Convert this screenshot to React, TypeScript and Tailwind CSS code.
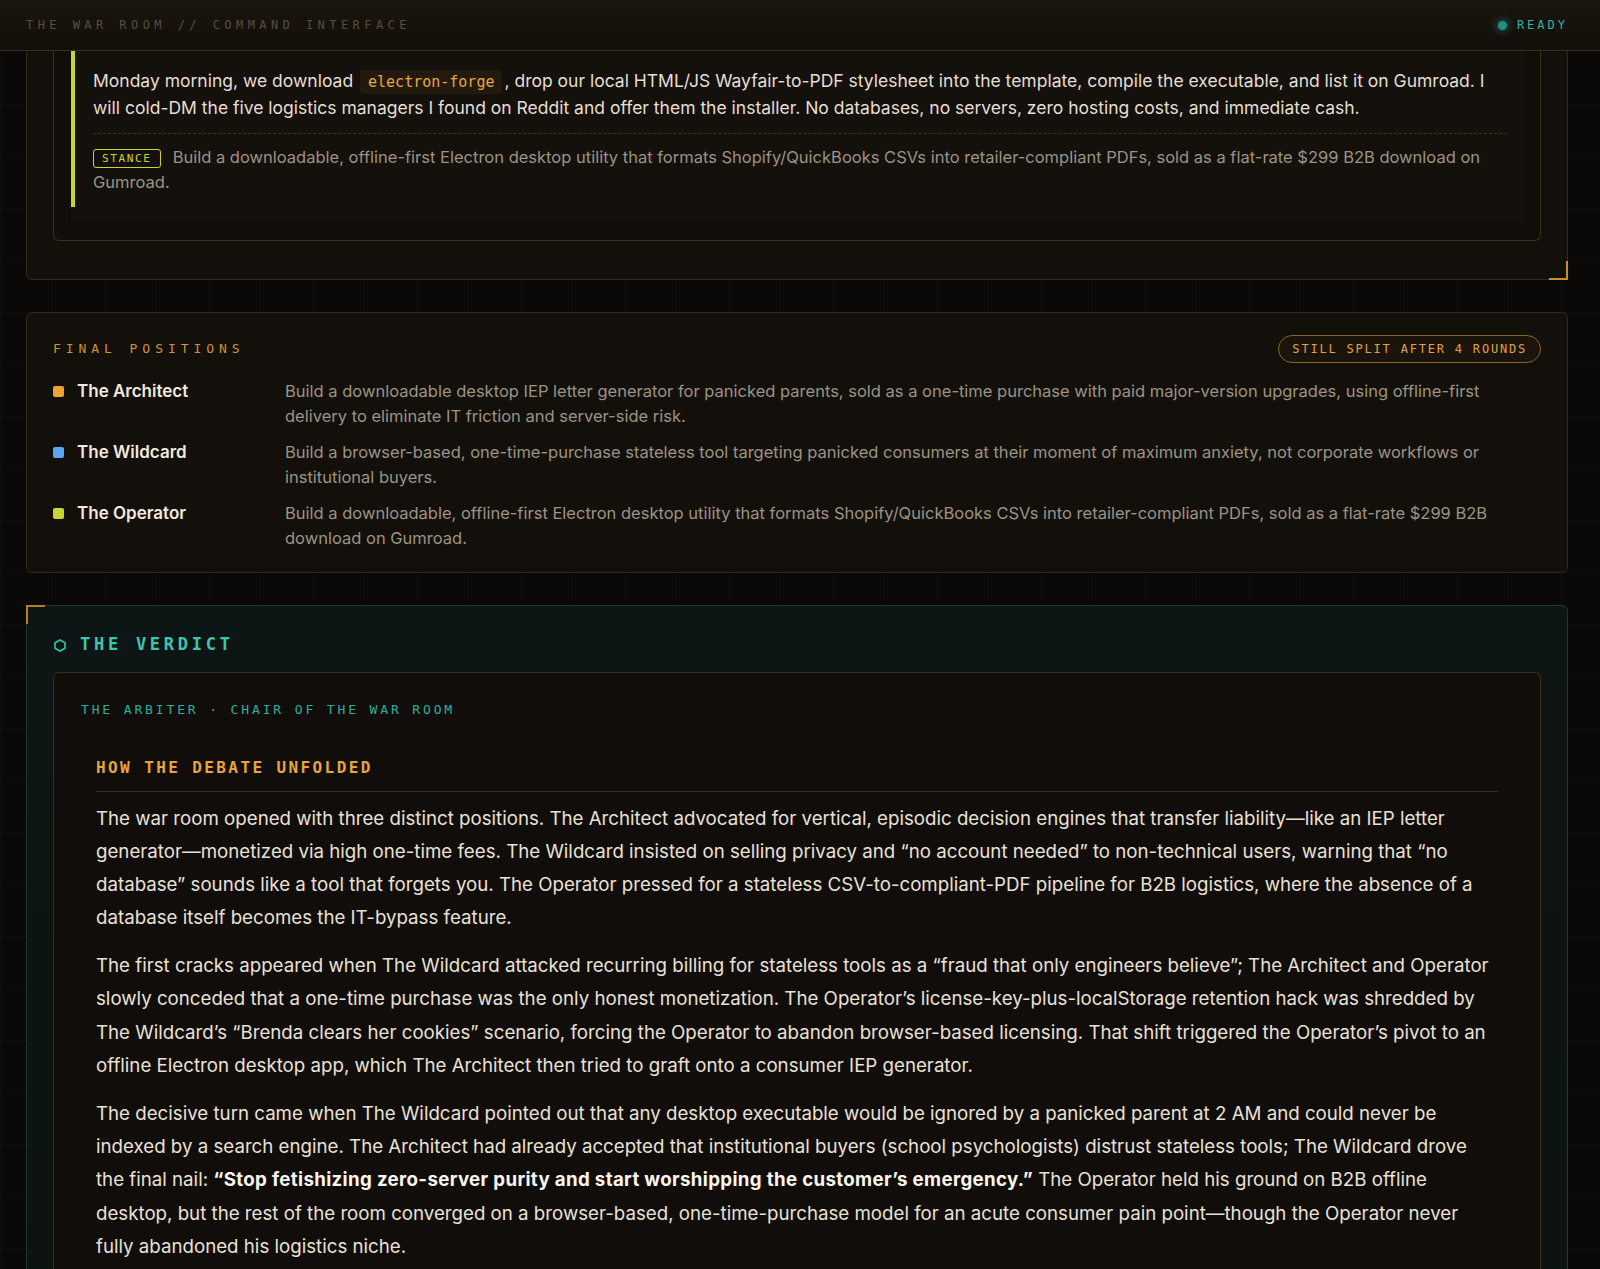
import React from "react";

const mono = { fontFamily: '"DejaVu Sans Mono", "Liberation Mono", monospace' };
const sans = { fontFamily: 'Inter, "Noto Sans", sans-serif' };

function Header() {
  return (
    <div className="h-[51px] shrink-0 flex items-center justify-between pl-[26px] pr-[32px] border-b border-[#3a2e1b] bg-[linear-gradient(180deg,#1a150e,#120e09)]">
      <div style={mono} className="text-[12px] tracking-[0.37em] text-[#574e41]">
        THE WAR ROOM // COMMAND INTERFACE
      </div>
      <div className="flex items-center gap-[10px]">
        <span className="w-[9px] h-[9px] rounded-full bg-[#1f8f80] shadow-[0_0_8px_#1f8f80]" />
        <span style={mono} className="text-[12px] tracking-[0.25em] text-[#2fb3a2]">READY</span>
      </div>
    </div>
  );
}

function TopCard() {
  return (
    <div className="relative ml-[26px] mr-[32px] border-x border-b border-[#33291a] rounded-b-[6px] bg-[#13100b] px-[26px] pb-[38px]">
      <div className="border-x border-b border-[#3a2f1c] rounded-b-[6px] bg-[#110e0a] px-[17px] pb-[18px]">
        <div className="bg-[#14100b] pr-[16px] pb-[15px]">
          <div className="border-l-[4px] border-[#c9d62f] pl-[18px] pt-[17px] pb-[12px]">
            <p style={sans} className="text-[17.5px] leading-[26.5px] text-[#e6ded2]">
              Monday morning, we download{" "}
              <code style={mono} className="inline-block mx-[2px] px-[8px] py-[1px] leading-[22px] rounded-[4px] bg-[#231a0f] text-[#e6a640] text-[15px]">electron-forge</code>
              , drop our local HTML/JS Wayfair-to-PDF stylesheet into the template, compile the executable, and list it on Gumroad. I will cold-DM the five logistics managers I found on Reddit and offer them the installer. No databases, no servers, zero hosting costs, and immediate cash.
            </p>
            <div className="mt-[12px] border-t border-dashed border-[#3a3222]" />
            <p style={sans} className="mt-[11px] text-[16.5px] leading-[25px] text-[#9b9384]">
              <span style={mono} className="inline-block align-[1px] mr-[12px] px-[8px] leading-[17px] text-[11px] tracking-[0.15em] text-[#c9d62f] border border-[#c9d62f] rounded-[3px]">STANCE</span>
              Build a downloadable, offline-first Electron desktop utility that formats Shopify/QuickBooks CSVs into retailer-compliant PDFs, sold as a flat-rate $299 B2B download on Gumroad.
            </p>
          </div>
        </div>
      </div>
      <span className="absolute right-[-1px] bottom-[-1px] w-[19px] h-[19px] border-r-2 border-b-2 border-[#c98f2c]" />
    </div>
  );
}

const positions = [
  {
    name: "The Architect",
    color: "bg-[#f0a22e]",
    text: "Build a downloadable desktop IEP letter generator for panicked parents, sold as a one-time purchase with paid major-version upgrades, using offline-first delivery to eliminate IT friction and server-side risk.",
  },
  {
    name: "The Wildcard",
    color: "bg-[#5aa8f2]",
    text: "Build a browser-based, one-time-purchase stateless tool targeting panicked consumers at their moment of maximum anxiety, not corporate workflows or institutional buyers.",
  },
  {
    name: "The Operator",
    color: "bg-[#c9d62f]",
    text: "Build a downloadable, offline-first Electron desktop utility that formats Shopify/QuickBooks CSVs into retailer-compliant PDFs, sold as a flat-rate $299 B2B download on Gumroad.",
  },
];

function FinalPositions() {
  return (
    <div className="ml-[26px] mr-[32px] mt-[32px] border border-[#33291a] rounded-[6px] bg-[#13100b] px-[26px] pt-[22px] pb-[22px]">
      <div className="flex items-center justify-between">
        <div style={mono} className="text-[13px] tracking-[0.38em] text-[#d4912d]">FINAL POSITIONS</div>
        <div style={mono} className="h-[28px] flex items-center px-[13px] rounded-full border border-[#8a6424] bg-[#1a140b] text-[12px] tracking-[0.15em] text-[#e2a243]">
          STILL SPLIT AFTER 4 ROUNDS
        </div>
      </div>
      <div className="mt-[16px] flex flex-col gap-[12px]">
        {positions.map((p) => (
          <div key={p.name} className="flex">
            <div className="w-[232px] shrink-0 flex items-start gap-[13px]">
              <span className={`mt-[7px] w-[11px] h-[11px] rounded-[2px] ${p.color}`} />
              <span style={sans} className="text-[17px] leading-[24.5px] font-semibold text-[#f1e9dd]">{p.name}</span>
            </div>
            <p style={sans} className="text-[16.5px] leading-[24.5px] text-[#9b9384]">{p.text}</p>
          </div>
        ))}
      </div>
    </div>
  );
}

function Verdict() {
  return (
    <div className="relative ml-[26px] mr-[32px] mt-[32px] border border-[#1c3a35] rounded-t-[6px] bg-[linear-gradient(180deg,#0d1614,#0c1311)] px-[26px] pt-[24px]">
      <span className="absolute left-[-1px] top-[-1px] w-[19px] h-[19px] border-l-2 border-t-2 border-[#b0802a]" />
      <div className="flex items-center gap-[14px] h-[30px]">
        <svg width="12" height="13" viewBox="0 0 12 13" className="ml-[1px]">
          <polygon points="6,1 11,3.75 11,9.25 6,12 1,9.25 1,3.75" fill="none" stroke="#36c2ad" strokeWidth="1.6" />
        </svg>
        <span style={mono} className="text-[17px] font-bold tracking-[0.22em] text-[#3cc6b1]">THE VERDICT</span>
      </div>
      <div className="mt-[12px] border-x border-t border-[#3a2e1a] rounded-t-[6px] bg-[#110d0a] px-[27px] pt-[27px] pb-[40px]">
        <div style={mono} className="text-[13px] tracking-[0.22em] text-[#2fae9e]">THE ARBITER · CHAIR OF THE WAR ROOM</div>
        <div className="px-[15px] mt-[36px]">
          <div style={mono} className="text-[16px] font-bold tracking-[0.15em] text-[#e7a53c] pb-[11px] border-b border-[#3a2e1a]">
            HOW THE DEBATE UNFOLDED
          </div>
          <div style={sans} className="mt-[10px] text-[18.7px] leading-[33.3px] text-[#e9e1d5] flex flex-col gap-[14.5px]">
            <p>
              The war room opened with three distinct positions. The Architect advocated for vertical, episodic decision engines that transfer liability—like an IEP letter generator—monetized via high one-time fees. The Wildcard insisted on selling privacy and “no account needed” to non-technical users, warning that “no database” sounds like a tool that forgets you. The Operator pressed for a stateless CSV-to-compliant-PDF pipeline for B2B logistics, where the absence of a database itself becomes the IT-bypass feature.
            </p>
            <p>
              The first cracks appeared when The Wildcard attacked recurring billing for stateless tools as a “fraud that only engineers believe”; The Architect and Operator slowly conceded that a one-time purchase was the only honest monetization. The Operator’s license-key-plus-localStorage retention hack was shredded by The Wildcard’s “Brenda clears her cookies” scenario, forcing the Operator to abandon browser-based licensing. That shift triggered the Operator’s pivot to an offline Electron desktop app, which The Architect then tried to graft onto a consumer IEP generator.
            </p>
            <p>
              The decisive turn came when The Wildcard pointed out that any desktop executable would be ignored by a panicked parent at 2 AM and could never be indexed by a search engine. The Architect had already accepted that institutional buyers (school psychologists) distrust stateless tools; The Wildcard drove the final nail:{" "}
              <strong className="font-bold tracking-[0.018em] text-[#fbf5ec]">“Stop fetishizing zero-server purity and start worshipping the customer’s emergency.”</strong>{" "}
              The Operator held his ground on B2B offline desktop, but the rest of the room converged on a browser-based, one-time-purchase model for an acute consumer pain point—though the Operator never fully abandoned his logistics niche.
            </p>
          </div>
        </div>
      </div>
    </div>
  );
}

export default function App() {
  return (
    <div className="h-[1269px] w-full overflow-hidden flex flex-col bg-[#0b0907] bg-[linear-gradient(rgba(255,255,255,0.018)_1px,transparent_1px),linear-gradient(90deg,rgba(255,255,255,0.018)_1px,transparent_1px)] bg-[size:52px_52px]">
      <Header />
      <div className="flex-1 overflow-hidden">
        <TopCard />
        <FinalPositions />
        <Verdict />
      </div>
    </div>
  );
}
